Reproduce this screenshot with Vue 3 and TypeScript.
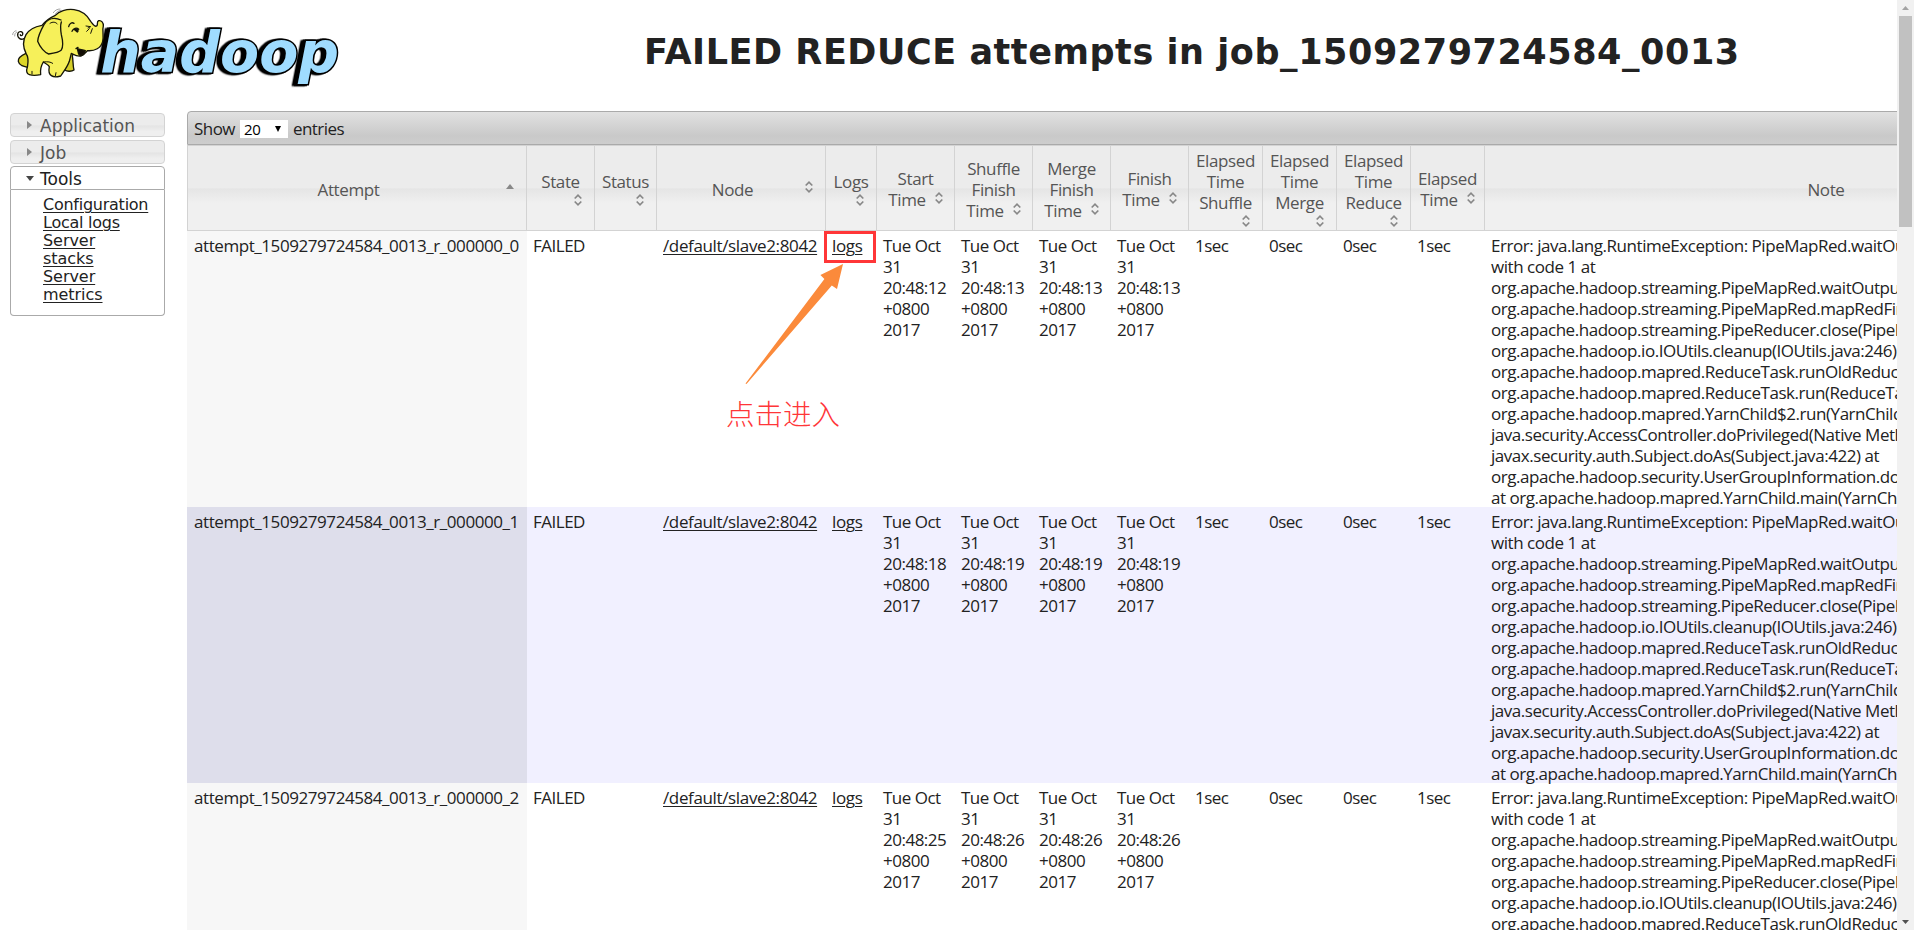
<script setup lang="ts">
interface Column {
  key: string
  lines: string[]
  sort: 'asc' | 'beside' | 'below' | 'inline' | 'none'
}

interface Attempt {
  id: string
  start: string
  finish: string
}

const columns: Column[] = [
  { key: 'attempt', lines: ['Attempt'], sort: 'asc' },
  { key: 'state', lines: ['State'], sort: 'below' },
  { key: 'status', lines: ['Status'], sort: 'below' },
  { key: 'node', lines: ['Node'], sort: 'beside' },
  { key: 'logs', lines: ['Logs'], sort: 'below' },
  { key: 'start', lines: ['Start', 'Time'], sort: 'inline' },
  { key: 'shuffle', lines: ['Shuffle', 'Finish', 'Time'], sort: 'inline' },
  { key: 'merge', lines: ['Merge', 'Finish', 'Time'], sort: 'inline' },
  { key: 'finish', lines: ['Finish', 'Time'], sort: 'inline' },
  { key: 'eshuffle', lines: ['Elapsed', 'Time', 'Shuffle'], sort: 'below' },
  { key: 'emerge', lines: ['Elapsed', 'Time', 'Merge'], sort: 'below' },
  { key: 'ereduce', lines: ['Elapsed', 'Time', 'Reduce'], sort: 'below' },
  { key: 'elapsed', lines: ['Elapsed', 'Time'], sort: 'inline' },
  { key: 'note', lines: ['Note'], sort: 'none' },
]

const attempts: Attempt[] = [
  { id: 'attempt_1509279724584_0013_r_000000_0', start: '20:48:12', finish: '20:48:13' },
  { id: 'attempt_1509279724584_0013_r_000000_1', start: '20:48:18', finish: '20:48:19' },
  { id: 'attempt_1509279724584_0013_r_000000_2', start: '20:48:25', finish: '20:48:26' },
]

const times = (a: Attempt): string[] => [a.start, a.finish, a.finish, a.finish]
const elapsed: string[] = ['1sec', '0sec', '0sec', '1sec']

const trace: string[] = [
  'Error: java.lang.RuntimeException: PipeMapRed.waitOutputThreads(): subprocess failed',
  'with code 1 at',
  'org.apache.hadoop.streaming.PipeMapRed.waitOutputThreads(PipeMapRed.java:322) at',
  'org.apache.hadoop.streaming.PipeMapRed.mapRedFinished(PipeMapRed.java:535) at',
  'org.apache.hadoop.streaming.PipeReducer.close(PipeReducer.java:134) at',
  'org.apache.hadoop.io.IOUtils.cleanup(IOUtils.java:246) at',
  'org.apache.hadoop.mapred.ReduceTask.runOldReducer(ReduceTask.java:459) at',
  'org.apache.hadoop.mapred.ReduceTask.run(ReduceTask.java:392) at',
  'org.apache.hadoop.mapred.YarnChild$2.run(YarnChild.java:164) at',
  'java.security.AccessController.doPrivileged(Native Method) at',
  'javax.security.auth.Subject.doAs(Subject.java:422) at',
  'org.apache.hadoop.security.UserGroupInformation.doAs(UserGroupInformation.java:1698)',
  'at org.apache.hadoop.mapred.YarnChild.main(YarnChild.java:158)',
]
</script>

<template>
  <div class="page">
    <div class="view">
      <header class="top">
        <svg class="logo" width="350" height="95" viewBox="0 0 1050 285">
          <text class="wordmark" x="301" y="216" textLength="716" lengthAdjust="spacingAndGlyphs">hadoop</text>
          <g stroke="#161608" stroke-width="4" stroke-linecap="round" stroke-linejoin="round" fill="#f4ee3c">
            <path d="M72 116C60 122 50 110 54 99C58 92 70 94 68 103C67 108 61 108 61 104" fill="none" />
            <path d="M78 160C64 166 54 176 55 184C58 198 72 200 84 202L92 178Z" fill="#dcd527" />
            <path d="M196 160L194 210C202 216 216 214 222 210C218 194 220 182 217 168L224 150Z" fill="#d4cd28" />
            <path class="body" d="M126 76C104 80 86 90 78 104C68 122 70 144 78 160C88 174 84 190 82 202C78 212 80 222 88 224C100 228 112 226 122 224C120 210 124 196 130 186C138 192 146 194 148 200C146 210 146 222 154 227C164 234 174 230 182 228C190 216 202 202 208 184L214 160C222 164 232 170 242 168C252 166 256 158 262 152C284 154 304 144 308 124C312 108 306 90 310 78C311 68 304 60 296 62C288 66 296 72 290 78C284 82 280 74 272 64C262 46 244 32 222 29C200 26 176 34 166 46C148 54 134 66 126 76Z" />
            <path class="ear" d="M183 60C160 50 142 58 132 74C122 92 114 110 113 124C120 142 134 158 146 162C160 160 178 156 184 150C190 140 188 120 184 104C182 92 180 78 184 66" />
            <path d="M232 146C240 150 248 148 256 152C252 168 240 170 236 162Z" fill="#120d04" />
            <path d="M228 146L234 142M206 80C208 70 216 66 222 70M216 94C220 84 230 82 236 88" fill="none" />
            <path d="M222 88C230 84 238 92 232 96Z" fill="#111" />
            <path d="M258 78L272 80L264 84M260 94L268 86M272 100L277 86" fill="none" stroke-width="3" />
            <path d="M150 70C158 64 168 66 172 72M130 186C144 184 152 186 158 190M96 222V214M166 228L168 218" fill="none" stroke-width="3" />
          </g>
          <g fill="none" stroke="#777" stroke-width="2" stroke-linecap="round">
            <path d="M38 104C38 98 42 94 48 92M44 108C44 102 46 98 50 96M160 38C164 31 172 27 180 27M166 42C170 35 178 31 184 31" />
          </g>
        </svg>
        <h1>FAILED REDUCE attempts in job_1509279724584_0013</h1>
      </header>

      <div class="content">
        <nav class="side">
          <h3><svg width="5" height="8" viewBox="0 0 5 8"><path d="M0 0L5 4L0 8Z" fill="#888" /></svg><span>Application</span></h3>
          <h3><svg width="5" height="8" viewBox="0 0 5 8"><path d="M0 0L5 4L0 8Z" fill="#888" /></svg><span>Job</span></h3>
          <h3 class="open"><svg width="8" height="5" viewBox="0 0 8 5"><path d="M0 0H8L4 5Z" fill="#454545" /></svg><span>Tools</span></h3>
          <div class="panel">
            <a>Configuration</a>
            <a>Local logs</a>
            <a class="wide">Server<br>stacks</a>
            <a class="wide">Server<br>metrics</a>
          </div>
        </nav>

        <main class="grid">
          <div class="toolbar">
            <span>Show</span>
            <span class="select">20<svg width="6" height="6" viewBox="0 0 6 6"><path d="M0 0H6L3 6Z" fill="#000" /></svg></span>
            <span>entries</span>
          </div>
          <table>
            <colgroup>
              <col v-for="c in columns" :key="c.key" :class="'w-' + c.key">
            </colgroup>
            <thead>
              <tr>
                <th v-for="c in columns" :key="c.key">
                  <div class="head" :class="c.sort">
                    <span class="label"><template v-for="(l, i) in c.lines" :key="i"><br v-if="i">{{ l }}</template><svg v-if="c.sort === 'inline'" class="arrow" width="8" height="12" viewBox="0 0 8 12"><path d="M.7 4.5L4 1.2L7.3 4.5M.7 7.5L4 10.8L7.3 7.5" /></svg></span>
                    <svg v-if="c.sort === 'asc'" class="arrow" width="8" height="5" viewBox="0 0 8 5"><path class="solid" d="M0 5H8L4 0Z" /></svg>
                    <svg v-else-if="c.sort === 'below' || c.sort === 'beside'" class="arrow" width="8" height="12" viewBox="0 0 8 12"><path d="M.7 4.5L4 1.2L7.3 4.5M.7 7.5L4 10.8L7.3 7.5" /></svg>
                  </div>
                </th>
              </tr>
            </thead>
            <tbody>
              <tr v-for="a in attempts" :key="a.id">
                <td class="id">{{ a.id }}</td>
                <td>FAILED</td>
                <td></td>
                <td class="node"><a>/default/slave2:8042</a></td>
                <td class="log"><a>logs</a></td>
                <td v-for="(t, i) in times(a)" :key="'t' + i">Tue Oct<br>31<br>{{ t }}<br>+0800<br>2017</td>
                <td v-for="(e, i) in elapsed" :key="'e' + i">{{ e }}</td>
                <td class="note"><div v-for="(l, i) in trace" :key="i">{{ l }}</div></td>
              </tr>
            </tbody>
          </table>
        </main>
      </div>
    </div>

    <div class="scrollbar">
      <svg width="7" height="4" viewBox="0 0 7 4"><path d="M0 4H7L3.5 0Z" fill="#a3a3a3" /></svg>
      <div class="thumb"></div>
      <svg class="down" width="7" height="4" viewBox="0 0 7 4"><path d="M0 0H7L3.5 4Z" fill="#505050" /></svg>
    </div>

    <div class="marker"></div>
    <svg class="pointer" width="100" height="122" viewBox="0 0 100 122"><path d="M98 2L75.4 13L79.4 17L.5 121.5L1.5 122L86.8 23.5L92 27Z" fill="#fb8a3b" /></svg>
    <div class="callout">点击进入</div>
  </div>
</template>

<style>
html,
body {
  margin: 0;
  overflow: hidden;
}
</style>

<style scoped>
.page {
  position: relative;
  display: flex;
  width: 1914px;
  height: 930px;
  overflow: hidden;
  background: #fff;
  color: #222;
  font: 17px/21px 'Open Sans', 'Noto Sans', sans-serif;
}
.view {
  width: 1897px;
  height: 930px;
  overflow: hidden;
}
.top {
  display: flex;
  height: 111px;
}
.logo {
  flex: none;
}
.wordmark {
  font: italic bold 172px 'DejaVu Sans', sans-serif;
  fill: #9fdcff;
  stroke: #000;
  stroke-width: 9;
  paint-order: stroke;
  filter: drop-shadow(-7px 1px 0 #000) drop-shadow(-6px 1px 0 #000);
}
.body,
.ear {
  fill: #f6f05a;
}
h1 {
  margin: 32px 0 0 294px;
  font: bold 35px/41px 'DejaVu Sans', sans-serif;
  letter-spacing: 0.56px;
  white-space: nowrap;
}
.content {
  display: flex;
}
.side {
  flex: none;
  box-sizing: border-box;
  width: 187px;
  padding: 2px 22px 0 10px;
  font: 16px/18px 'DejaVu Sans', sans-serif;
}
.side h3 {
  display: flex;
  align-items: center;
  box-sizing: border-box;
  height: 24px;
  margin: 0 0 3px;
  padding-left: 16px;
  border: 1px solid #d3d3d3;
  border-radius: 4px;
  background: linear-gradient(#ececec 0 50%, #e4e4e4 54%, #efefef 80%);
  color: #555;
  font: 17px/18px 'DejaVu Sans', sans-serif;
}
.side h3 span {
  margin-left: 8px;
  padding-top: 2px;
}
.side h3.open {
  margin: -1px 0 0;
  padding-left: 15px;
  border-color: #aaa;
  border-radius: 4px 4px 0 0;
  background: #fff;
  color: #212121;
}
.side h3.open span {
  margin-left: 6px;
}
.panel {
  box-sizing: border-box;
  height: 126px;
  padding: 6px 0 0 32px;
  border: 1px solid #aaa;
  border-top: 0;
  border-radius: 0 0 4px 4px;
  letter-spacing: -0.25px;
}
.panel a {
  display: block;
}
.panel .wide {
  letter-spacing: -0.05px;
}
a {
  color: #222;
  text-decoration: underline;
  text-decoration-thickness: 1px;
  text-underline-offset: 2px;
}
.grid {
  flex: none;
  width: 1981px;
}
.toolbar {
  display: flex;
  align-items: center;
  gap: 5px;
  box-sizing: border-box;
  height: 34px;
  padding: 1px 0 0 6px;
  border: 1px solid #aaa;
  border-radius: 4px 0 0;
  background: linear-gradient(#e1e1e1, #c9c9c9 75%, #cdcdcd);
  letter-spacing: -0.55px;
}
.select {
  display: flex;
  align-items: center;
  justify-content: space-between;
  box-sizing: border-box;
  width: 48px;
  height: 18px;
  margin-top: 1px;
  padding: 0 7px 0 4px;
  background: #fff;
  color: #000;
  font-size: 15px;
  letter-spacing: -0.4px;
}
table {
  width: 1981px;
  table-layout: fixed;
  border-collapse: separate;
  border-spacing: 0;
}
.w-attempt { width: 340px; }
.w-state { width: 68px; }
.w-status { width: 62px; }
.w-node { width: 169px; }
.w-logs { width: 51px; }
.w-start,
.w-shuffle,
.w-merge,
.w-finish { width: 78px; }
.w-eshuffle,
.w-emerge,
.w-ereduce,
.w-elapsed { width: 74px; }
th {
  height: 86px;
  box-sizing: border-box;
  padding: 0;
  border: 1px solid #d3d3d3;
  border-left: 0;
  background: linear-gradient(#ececec 0 50%, #e5e5e5 51%, #f0f0f0 68%);
  color: #555;
  font-weight: 400;
  letter-spacing: -0.4px;
}
th:first-child {
  border-left: 1px solid #d3d3d3;
}
.head {
  display: flex;
  align-items: center;
  justify-content: center;
  padding-top: 2px;
}
.arrow {
  flex: none;
  fill: none;
  stroke: #888;
  stroke-width: 1.7;
}
.arrow .solid {
  fill: #888;
  stroke: none;
}
.asc,
.beside {
  padding-right: 12px;
  padding-left: 3px;
}
.asc .label,
.beside .label {
  flex: 1;
}
.asc .arrow,
.beside .arrow {
  margin-bottom: 5px;
}
.below {
  flex-direction: column;
  padding-top: 0;
}
.below .arrow {
  align-self: flex-end;
  margin: 2px 12px 0 0;
}
.inline .arrow {
  margin-left: 9px;
  vertical-align: 2px;
}
td {
  height: 276px;
  box-sizing: border-box;
  padding: 4px 0 0 6px;
  vertical-align: top;
  white-space: nowrap;
  letter-spacing: -0.5px;
}
td div {
  height: 21px;
}
.id {
  padding-left: 7px;
  background: #f7f7f7;
  letter-spacing: -0.43px;
}
.node,
.log {
  letter-spacing: -0.36px;
}
.note {
  letter-spacing: -0.46px;
}
.note div:last-child {
  height: 20px;
}
tbody tr:nth-child(even) {
  background: #f1f0ff;
}
tr:nth-child(even) .id {
  background: #dedeeb;
}
.scrollbar {
  display: flex;
  flex-direction: column;
  align-items: center;
  box-sizing: border-box;
  width: 17px;
  padding: 6px 0;
  background: #f1f1f1;
}
.thumb {
  width: 13px;
  height: 211px;
  margin-top: 6px;
  background: #c1c1c1;
}
.down {
  margin-top: auto;
}
.marker {
  position: absolute;
  left: 824px;
  top: 231px;
  width: 46px;
  height: 26px;
  border: 3px solid #ff3638;
}
.pointer {
  position: absolute;
  left: 745px;
  top: 262px;
}
.callout {
  position: absolute;
  left: 726px;
  top: 395px;
  color: #ff3638;
  font: 300 28.5px/36px 'Noto Sans CJK SC', sans-serif;
}
</style>
